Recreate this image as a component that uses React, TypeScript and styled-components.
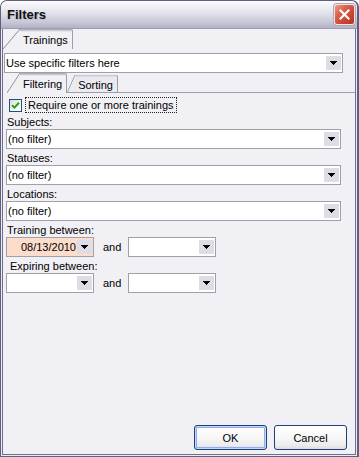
import React from "react";
import styled, { createGlobalStyle } from "styled-components";

const GlobalStyle = createGlobalStyle`
  html, body {
    margin: 0;
    padding: 0;
    background: #ffffff;
  }
  body {
    font-family: "Liberation Sans", Arial, sans-serif;
    font-size: 11px;
    color: #000;
  }
  * {
    box-sizing: border-box;
  }
`;

const Window = styled.div`
  width: 359px;
  height: 457px;
  display: flex;
  flex-direction: column;
  border: 1px solid #5f5f80;
  border-right-width: 2px;
  border-radius: 7px 7px 0 0;
  background: #ecebf1;
  overflow: hidden;
`;

const TitleBar = styled.div`
  height: 28px;
  flex-shrink: 0;
  display: flex;
  align-items: center;
  justify-content: space-between;
  padding: 0 2px 0 6px;
  background: linear-gradient(
    to bottom,
    #fbfbfd 0%,
    #f1f1f5 20%,
    #dedee8 50%,
    #c6c6d6 80%,
    #b2b1c6 100%
  );
  border-bottom: 1px solid #9c9cb4;
  border-radius: 6px 6px 0 0;
`;

const Title = styled.span`
  font-family: "Liberation Sans", Arial, sans-serif;
  font-weight: bold;
  font-size: 13px;
  color: #111;
  text-shadow: 1px 1px 0 #bdbdcd;
`;

const CloseButton = styled.div`
  width: 21px;
  height: 21px;
  display: flex;
  align-items: center;
  justify-content: center;
  border: 1px solid #f6e2dc;
  border-radius: 3px;
  background: linear-gradient(135deg, #ec9a8a 0%, #d9604b 35%, #c94330 70%, #b93322 100%);
  box-shadow: 0 0 0 1px #a8a8bc;
`;

const Frame = styled.div`
  flex: 1;
  display: flex;
  flex-direction: column;
  margin: 0 1px 1px 1px;
  border: 1px solid #6e6e90;
  border-top: none;
  background: #f1f0f5;
`;

const TabStrip = styled.div<{ $inset: number }>`
  display: flex;
  align-items: flex-end;
  height: 20px;
  flex-shrink: 0;
  padding-left: ${(p) => p.$inset}px;
`;

const StripLine = styled.div`
  flex: 1;
  height: 1px;
  background: #9d9dab;
`;

const Tab = styled.div<{ $active?: boolean; $slant: number }>`
  position: relative;
  z-index: ${(p) => (p.$active ? 2 : 1)};
  height: ${(p) => (p.$active ? 20 : 18)}px;
  margin-left: ${(p) => p.$slant}px;
  padding: 2px 4px 0 3px;
  display: flex;
  align-items: center;
  background: ${(p) =>
    p.$active
      ? "linear-gradient(#a3a3b3 0, #b9b9c7 1px, #d9d9e2 2px, #f1f0f5 3px, #f1f0f5 100%)"
      : "linear-gradient(#b9b9c6 0, #d4d4de 1px, #e8e8ee 2px, #ebebf0 100%)"};
  border-right: 1px solid #9d9dab;
  border-bottom: ${(p) => (p.$active ? "none" : "1px solid #9d9dab")};
  border-top-right-radius: 2px;

  &::before {
    content: "";
    position: absolute;
    top: 0;
    bottom: ${(p) => (p.$active ? 0 : -1)}px;
    left: -${(p) => p.$slant}px;
    width: ${(p) => p.$slant}px;
    background: ${(p) =>
      p.$active
        ? "linear-gradient(to bottom right, transparent calc(50% - 0.8px), #8f8fa0 50%, #f1f0f5 calc(50% + 0.8px))"
        : "linear-gradient(#9d9dab, #9d9dab) bottom / 100% 1px no-repeat, linear-gradient(to bottom right, transparent calc(50% - 0.8px), #9d9dab 50%, #ebebf0 calc(50% + 0.8px))"};
  }
`;

const OuterPanel = styled.div`
  display: flex;
  flex-direction: column;
`;

const InnerPanel = styled.div`
  display: flex;
  flex-direction: column;
  padding: 4px 14px 0 3px;
`;

const Combo = styled.div<{ $bg?: string; $width?: number; $inset?: string }>`
  display: flex;
  align-items: center;
  height: 20px;
  width: ${(p) => (p.$width ? `${p.$width}px` : "auto")};
  flex-shrink: 0;
  margin: ${(p) => p.$inset || "0"};
  border: 1px solid #a0a0aa;
  background: ${(p) => p.$bg || "#ffffff"};
`;

const ComboText = styled.span<{ $right?: boolean }>`
  flex: 1;
  padding: 0 ${(p) => (p.$right ? "1px" : "0")} 0 ${(p) => (p.$right ? "0" : "1px")};
  text-align: ${(p) => (p.$right ? "right" : "left")};
  white-space: nowrap;
  overflow: hidden;
`;

const DropButton = styled.span`
  width: 15px;
  height: 14px;
  margin-right: 1px;
  display: flex;
  align-items: center;
  justify-content: center;
  background: #dedde5;
`;

const CheckRow = styled.div`
  display: flex;
  align-items: center;
  height: 16px;
  padding-left: 3px;
`;

const CheckBox = styled.span`
  width: 13px;
  height: 13px;
  display: flex;
  align-items: center;
  justify-content: center;
  border: 1px solid #1c5180;
  background: linear-gradient(135deg, #dcdcd7 0%, #f4f4f1 60%, #ffffff 100%);
`;

const FocusLabel = styled.span`
  margin-left: 3px;
  padding: 0 2px;
  line-height: 14px;
  border: 1px dotted #222;
`;

const FieldLabel = styled.div<{ $indent?: number }>`
  margin-top: 2px;
  line-height: 14px;
  padding-left: ${(p) => (p.$indent || 0) + 1}px;
`;

const DateRow = styled.div`
  display: flex;
  align-items: center;
`;

const AndText = styled.span`
  margin: 0 7px 0 9px;
`;

const ButtonRow = styled.div`
  margin-top: auto;
  display: flex;
  justify-content: flex-end;
  gap: 7px;
  padding: 0 8px 4px 0;
`;

const DialogButton = styled.button<{ $default?: boolean }>`
  width: 73px;
  height: 25px;
  padding: 0;
  font-family: "Liberation Sans", Arial, sans-serif;
  font-size: 11px;
  color: #000;
  border: 1px solid #1d3f7a;
  border-radius: 3px;
  background: linear-gradient(#ffffff 0%, #f7f7f8 50%, #ebebee 85%, #dcdce2 100%);
  box-shadow: ${(p) =>
    p.$default ? "inset 0 0 0 1px #c5d7f5, inset 0 0 0 2px #8eaeea" : "none"};
`;

function Arrow() {
  return (
    <svg width="7" height="4" viewBox="0 0 7 4" shapeRendering="crispEdges">
      <polygon points="0,0 7,0 4,4 3,4" fill="#000" />
    </svg>
  );
}

function Select({
  text,
  bg,
  width,
  inset,
  right,
}: {
  text?: string;
  bg?: string;
  width?: number;
  inset?: string;
  right?: boolean;
}) {
  return (
    <Combo $bg={bg} $width={width} $inset={inset}>
      <ComboText $right={right}>{text}</ComboText>
      <DropButton>
        <Arrow />
      </DropButton>
    </Combo>
  );
}

export default function App() {
  return (
    <>
      <GlobalStyle />
      <Window>
        <TitleBar>
          <Title>Filters</Title>
          <CloseButton>
            <svg width="11" height="11" viewBox="0 0 11 11">
              <path d="M1.5 1.5 L9.5 9.5 M9.5 1.5 L1.5 9.5" stroke="#fff" strokeWidth="2.2" strokeLinecap="square" />
            </svg>
          </CloseButton>
        </TitleBar>
        <Frame>
          <TabStrip $inset={0}>
            <Tab $active $slant={17}>Trainings</Tab>
          </TabStrip>
          <OuterPanel>
            <Select text="Use specific filters here" inset="4px 12px 0 1px" />
            <TabStrip $inset={4}>
              <Tab $active $slant={13}>Filtering</Tab>
              <Tab $slant={8}>Sorting</Tab>
              <StripLine />
            </TabStrip>
            <InnerPanel>
              <CheckRow>
                <CheckBox>
                  <svg width="9" height="9" viewBox="0 0 9 9">
                    <path d="M1 4.2 L3.4 6.6 L8 1.8" stroke="#21a121" strokeWidth="2" fill="none" />
                  </svg>
                </CheckBox>
                <FocusLabel>Require one or more trainings</FocusLabel>
              </CheckRow>
              <FieldLabel>Subjects:</FieldLabel>
              <Select text="(no filter)" />
              <FieldLabel>Statuses:</FieldLabel>
              <Select text="(no filter)" />
              <FieldLabel>Locations:</FieldLabel>
              <Select text="(no filter)" />
              <FieldLabel>Training between:</FieldLabel>
              <DateRow>
                <Select text="08/13/2010" bg="#fcdccb" width={88} right />
                <AndText>and</AndText>
                <Select width={88} />
              </DateRow>
              <FieldLabel $indent={3}>Expiring between:</FieldLabel>
              <DateRow>
                <Select width={88} />
                <AndText>and</AndText>
                <Select width={88} />
              </DateRow>
            </InnerPanel>
          </OuterPanel>
          <ButtonRow>
            <DialogButton $default>OK</DialogButton>
            <DialogButton>Cancel</DialogButton>
          </ButtonRow>
        </Frame>
      </Window>
    </>
  );
}
